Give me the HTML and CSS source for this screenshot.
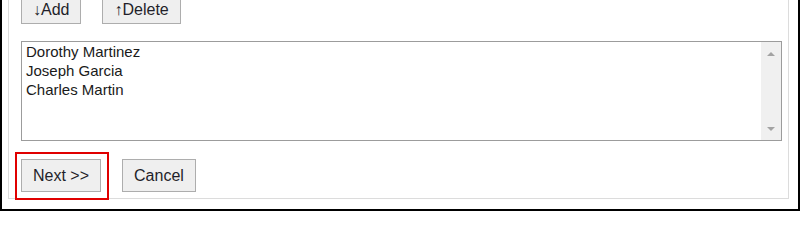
FILE: index.html
```html
<!DOCTYPE html>
<html>
<head>
<meta charset="utf-8">
<link rel="stylesheet" href="styles.css">
</head>
<body>
<div class="frame">
  <div class="panel">
    <div class="toolbar">
      <button class="btn"><span class="glyph">↓&#xFE0E;</span>Add</button>
      <button class="btn"><span class="glyph">↑&#xFE0E;</span>Delete</button>
    </div>
    <div class="listbox">
      <div class="items">
        <div class="item">Dorothy Martinez</div>
        <div class="item">Joseph Garcia</div>
        <div class="item">Charles Martin</div>
      </div>
      <div class="scrollbar">
        <span class="arrow up"></span>
        <span class="arrow down"></span>
      </div>
    </div>
    <div class="actions">
      <span class="highlight">
        <button class="btn">Next &gt;&gt;</button>
        <span class="mark"></span>
      </span>
      <button class="btn">Cancel</button>
    </div>
  </div>
</div>
</body>
</html>
```
FILE: styles.css
```css
html, body {
  margin: 0;
  padding: 0;
  background: #fff;
}
body {
  width: 800px;
  height: 211px;
  overflow: hidden;
  font-family: "Liberation Sans", Arial, sans-serif;
  font-size: 15px;
  color: #1a1a1a;
}
.frame {
  box-sizing: border-box;
  width: 800px;
  height: 211px;
  border: 2px solid #000;
  border-top: none;
  padding: 0 9px 10px 6px;
  display: flex;
}
.panel {
  flex: 1;
  border: 1px solid #dcdcdc;
  border-top: none;
  padding: 0 6px 5px 12px;
  display: flex;
  flex-direction: column;
}
.toolbar {
  display: flex;
  gap: 21px;
}
.btn {
  box-sizing: border-box;
  height: 33px;
  padding: 0 11px;
  margin: 0;
  border: 1px solid #adadad;
  background: #efefef;
  font-family: "Liberation Sans", Arial, sans-serif;
  font-size: 16px;
  color: #1f1f2a;
  border-radius: 0;
}
.toolbar .btn {
  height: 24px;
  border-top: none;
  padding-bottom: 4px;
}
.glyph {
  font-family: "Liberation Sans", "DejaVu Sans", sans-serif;
  color: #1f1f2a;
}
.listbox {
  margin-top: 17px;
  height: 100px;
  box-sizing: border-box;
  border: 1px solid #9c9c9c;
  display: flex;
}
.items {
  flex: 1;
  padding: 0 4px;
  line-height: 19px;
}
.scrollbar {
  width: 20px;
  background: #f0f0f0;
  display: flex;
  flex-direction: column;
  justify-content: space-between;
  align-items: center;
  padding: 10px 0 9px;
}
.arrow {
  width: 0;
  height: 0;
  border-left: 4px solid transparent;
  border-right: 4px solid transparent;
}
.arrow.up {
  border-bottom: 4px solid #a3a3a3;
}
.arrow.down {
  border-top: 4px solid #a3a3a3;
}
.actions {
  margin-top: 18px;
  display: flex;
  gap: 21px;
}
.highlight {
  position: relative;
  display: flex;
}
.mark {
  position: absolute;
  top: -7px;
  left: -6px;
  right: -8px;
  bottom: -8px;
  border: 2px solid #e00000;
}
```
